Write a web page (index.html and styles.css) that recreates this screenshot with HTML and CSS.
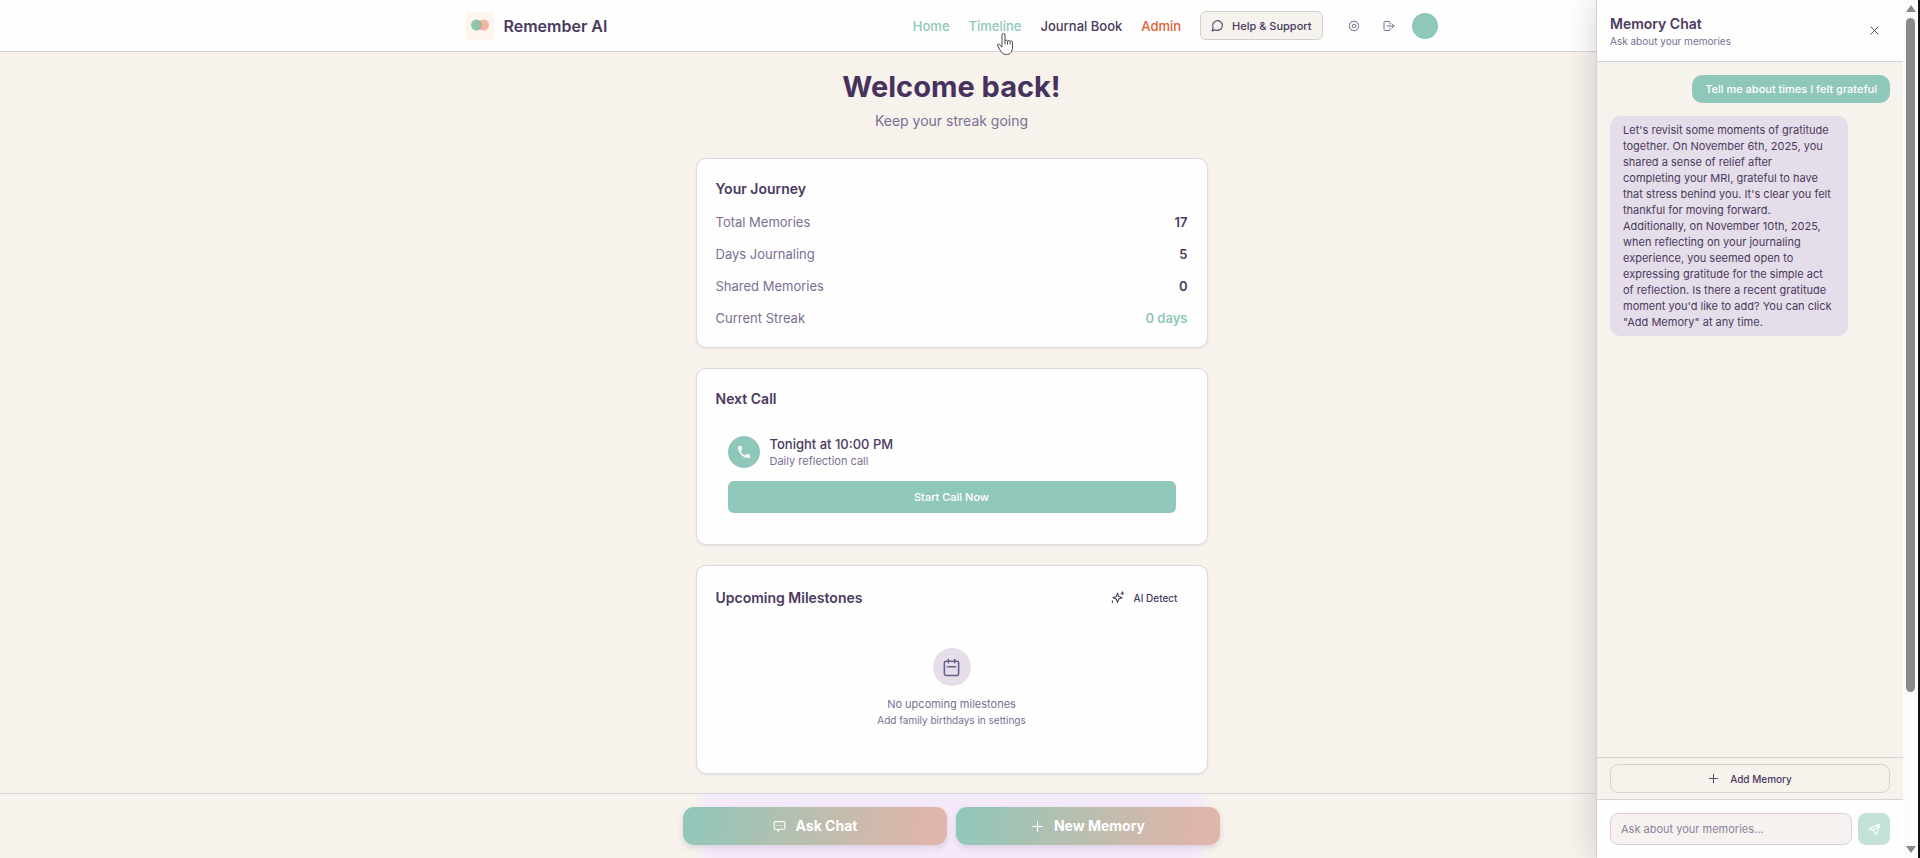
FILE: index.html
```
<!DOCTYPE html>
<html lang="en">

<head>
  <meta charset="UTF-8">
  <meta name="viewport" content="width=device-width, initial-scale=1.0">
  <title>Remember AI</title>
  <link rel="stylesheet" href="styles.css">
</head>

<body>
  <div class="window">
    <div class="app">
      <header class="topbar">
        <div class="topbar-inner">
          <a class="brand" href="#">
            <svg class="brand-logo" viewBox="0 0 28 28" aria-hidden="true">
              <rect width="28" height="28" fill="#fdf5ee" />
              <circle cx="17.5" cy="13" r="5.5" fill="#f5b49f" />
              <circle cx="10.5" cy="13" r="5.5" fill="#8ec5ae" />
              <path d="M14 8.800a5.500 5.500 0 0 1 0 8.400a5.500 5.500 0 0 1 0-8.400z" fill="#b5b295" />
            </svg>
            <span>Remember AI</span>
          </a>
          <nav class="nav">
            <a class="nav-link active" href="#">Home</a>
            <a class="nav-link active" href="#">Timeline</a>
            <a class="nav-link" href="#">Journal Book</a>
            <a class="nav-link admin" href="#">Admin</a>
            <button class="help-btn" type="button">
              <svg class="icon" viewBox="0 0 24 24"><path d="M7.900 20A9 9 0 1 0 4 16.100L2 22Z" /></svg>
              Help &amp; Support
            </button>
            <div class="nav-tools">
              <button class="icon-btn" type="button" aria-label="Settings">
                <svg class="icon" viewBox="0 0 24 24"><path d="M12 2l2.300 1.600 2.700-.3 1.200 2.500 2.500 1.200-.3 2.700L22 12l-1.600 2.300.3 2.700-2.500 1.200-1.200 2.500-2.700-.3L12 22l-2.300-1.600-2.700.3-1.200-2.500L3.300 17l.3-2.700L2 12l1.600-2.300L3.300 7l2.500-1.200L7 3.300l2.700.3z" /><circle cx="12" cy="12" r="3.500" /></svg>
              </button>
              <button class="icon-btn" type="button" aria-label="Log out">
                <svg class="icon" viewBox="0 0 24 24"><path d="M14 8V5a2 2 0 0 0-2-2H4a2 2 0 0 0-2 2v14a2 2 0 0 0 2 2h8a2 2 0 0 0 2-2v-3M8 12h14M18 8l4 4-4 4" /></svg>
              </button>
              <span class="avatar"></span>
            </div>
          </nav>
        </div>
      </header>

      <main class="content">
        <div class="column">
          <h1>Welcome back!</h1>
          <p class="subtitle">Keep your streak going</p>

          <div class="cards">
            <section class="card">
              <h2>Your Journey</h2>
              <dl class="stats">
                <div class="stat"><dt>Total Memories</dt><dd>17</dd></div>
                <div class="stat"><dt>Days Journaling</dt><dd>5</dd></div>
                <div class="stat"><dt>Shared Memories</dt><dd>0</dd></div>
                <div class="stat"><dt>Current Streak</dt><dd class="streak">0 days</dd></div>
              </dl>
            </section>

            <section class="card">
              <h2>Next Call</h2>
              <div class="call">
                <div class="call-row">
                  <span class="call-icon">
                    <svg viewBox="0 0 24 24"><path fill="#fff" d="M6.600 10.800c1.400 2.800 3.800 5.100 6.600 6.600l2.200-2.200c.3-.3.700-.4 1-.2 1.100.4 2.300.6 3.600.6.6 0 1 .4 1 1V20c0 .6-.4 1-1 1C10.600 21 3 13.400 3 4c0-.6.4-1 1-1h3.500c.6 0 1 .4 1 1 0 1.300.2 2.400.6 3.600.1.300 0 .7-.2 1z" /></svg>
                  </span>
                  <div>
                    <p class="call-time">Tonight at 10:00 PM</p>
                    <p class="call-note">Daily reflection call</p>
                  </div>
                </div>
                <button class="call-btn" type="button">Start Call Now</button>
              </div>
            </section>

            <section class="card">
              <div class="card-head">
                <h2>Upcoming Milestones</h2>
                <button class="detect-btn" type="button">
                  <svg class="icon" viewBox="0 0 24 24"><path d="M12 4l2.200 6.300 6.300 2.200-6.300 2.200-2.200 6.300-2.200-6.300-6.300-2.200 6.300-2.200zM21 1.500v5M18.500 4h5M2.500 18v3" /></svg>
                  AI Detect
                </button>
              </div>
              <div class="empty">
                <span class="empty-icon">
                  <svg class="icon" viewBox="0 0 24 24"><rect x="3" y="4" width="18" height="18" rx="2" /><path d="M8 2v4M16 2v4M7 11h10" /></svg>
                </span>
                <p class="empty-title">No upcoming milestones</p>
                <p class="empty-note">Add family birthdays in settings</p>
              </div>
            </section>
          </div>
        </div>
      </main>

      <footer class="bottombar">
        <div class="actions">
          <button class="action-btn" type="button">
            <svg class="icon" viewBox="0 0 24 24"><path d="M4 3h16a2 2 0 0 1 2 2v10a2 2 0 0 1-2 2h-7l-4 4v-4H4a2 2 0 0 1-2-2V5a2 2 0 0 1 2-2zM7.500 10h.01M12 10h.01M16.500 10h.01" /></svg>
            Ask Chat
          </button>
          <button class="action-btn" type="button">
            <svg class="icon" viewBox="0 0 24 24"><path d="M12 3v18M3 12h18" /></svg>
            New Memory
          </button>
        </div>
      </footer>

      <aside class="chat">
        <div class="chat-head">
          <div>
            <h2 class="chat-title">Memory Chat</h2>
            <p class="chat-sub">Ask about your memories</p>
          </div>
          <button class="close-btn" type="button" aria-label="Close chat">
            <svg class="icon" viewBox="0 0 24 24"><path d="M4 4l16 16M20 4L4 20" /></svg>
          </button>
        </div>
        <div class="messages">
          <p class="msg user">Tell me about times I felt grateful</p>
          <p class="msg bot">Let's revisit some moments of gratitude together. On November 6th, 2025, you shared a sense of relief after completing your MRI, grateful to have that stress behind you. It's clear you felt thankful for moving forward. Additionally, on November 10th, 2025, when reflecting on your journaling experience, you seemed open to expressing gratitude for the simple act of reflection. Is there a recent gratitude moment you'd like to add? You can click "Add Memory" at any time.</p>
        </div>
        <div class="chat-add">
          <button class="add-btn" type="button">
            <svg class="icon" viewBox="0 0 24 24"><path d="M12 3v18M3 12h18" /></svg>
            Add Memory
          </button>
        </div>
        <form class="chat-form">
          <input class="chat-input" type="text" aria-label="Ask about your memories" placeholder="Ask about your memories...">
          <button class="send-btn" type="button" aria-label="Send">
            <svg class="icon" viewBox="0 0 24 24"><path d="M22 2L2 10l8 4 5 8zM22 2L10 14" /></svg>
          </button>
        </form>
      </aside>

      <svg class="pointer" viewBox="0 0 18 24" aria-hidden="true">
        <path d="M6 13V3a1.500 1.500 0 0 1 3 0v6a1.300 1.300 0 0 1 2.500.3 1.300 1.300 0 0 1 2.500.5 1.300 1.300 0 0 1 2.500.8V15c0 4-2 7.500-6 7.500-3.500 0-5-2-6.500-4.500l-2.300-4c-.8-1.700.8-2.500 2-1.400L6 15zM9 9v3.500M11.500 9.500v3M14 10v2.500" />
      </svg>
    </div>

    <div class="scrollbar" aria-hidden="true">
      <span class="arrow-up"></span>
      <span class="track"><span class="thumb"></span></span>
      <span class="arrow-down"></span>
    </div>
  </div>
</body>

</html>
```
FILE: styles.css
```
* {
  box-sizing: border-box;
}

body {
  margin: 0;
  font-family: Inter, "Liberation Sans", sans-serif;
  font-size: 13px;
  line-height: 20px;
  color: #4a3a60;
  background-color: #f7f2ec;
}

h1,
h2,
p,
dl,
dd {
  margin: 0;
}

a {
  text-decoration: none;
}

button {
  display: flex;
  align-items: center;
  justify-content: center;
  padding: 0;
  border: none;
  background: none;
  font: inherit;
  color: inherit;
  cursor: pointer;
}

.icon {
  width: 13px;
  height: 13px;
  flex-shrink: 0;
  fill: none;
  stroke: currentColor;
  stroke-width: 2;
  stroke-linecap: round;
  stroke-linejoin: round;
}

.window {
  display: flex;
  height: 100vh;
  border-right: 2px solid #111;
}

.app {
  position: relative;
  display: flex;
  flex-direction: column;
  flex: 1;
  overflow: hidden;
}

/* top bar */
.topbar {
  height: 52px;
  flex-shrink: 0;
  background-color: #fefefe;
  border-bottom: 1px solid #d3d2d6;
}

.topbar-inner {
  display: flex;
  align-items: center;
  justify-content: space-between;
  max-width: 972px;
  height: 100%;
  margin: 0 auto;
}

.brand {
  display: flex;
  align-items: center;
  gap: 10px;
  font-size: 16px;
  font-weight: 600;
  color: #4a3a60;
}

.brand-logo {
  width: 28px;
  height: 28px;
}

.nav {
  display: flex;
  align-items: center;
  gap: 19px;
}

.nav-link {
  font-weight: 500;
  color: #4a3a60;
}

.nav-link.active {
  color: #8fc7ba;
}

.nav-link.admin {
  color: #dd6031;
}

.help-btn {
  gap: 8px;
  height: 29px;
  padding: 0 10px;
  border: 1px solid #d3d0d2;
  border-radius: 6px;
  background-color: #f6f2ed;
  font-size: 11px;
  font-weight: 500;
}

.nav-tools {
  display: flex;
  align-items: center;
  gap: 10px;
}

.icon-btn {
  width: 25px;
  height: 25px;
  color: #7b6f94;
}

.icon-btn .icon {
  width: 12px;
  height: 12px;
}

.avatar {
  width: 26px;
  height: 26px;
  border-radius: 50%;
  background-color: #8fc7ba;
}

/* main column */
.content {
  flex: 1;
  overflow: hidden;
}

.column {
  max-width: 512px;
  margin: 0 auto;
  padding-top: 19px;
}

h1 {
  font-size: 29px;
  line-height: 32px;
  font-weight: 700;
  text-align: center;
  color: #46325c;
}

.subtitle {
  margin: 8px 0 27px;
  font-size: 14px;
  text-align: center;
  color: #7b6f94;
}

.cards {
  display: flex;
  flex-direction: column;
  gap: 20px;
}

.card {
  padding: 19px;
  border: 1px solid #dcd8dc;
  border-radius: 10px;
  background-color: #fefefe;
  box-shadow: 0 1px 2px rgba(74, 58, 96, 0.1);
}

h2 {
  font-size: 14px;
  line-height: 22px;
  font-weight: 600;
}

.stats {
  display: flex;
  flex-direction: column;
  gap: 12px;
  margin-top: 12px;
}

.stat {
  display: flex;
  justify-content: space-between;
}

.stat dt {
  color: #7b6f94;
}

.stat dd {
  font-weight: 600;
}

.stat .streak {
  color: #8fc7ba;
}

.call {
  margin-top: 13px;
  padding: 12px;
}

.call-row {
  display: flex;
  align-items: center;
  gap: 10px;
  margin-bottom: 12px;
}

.call-icon {
  display: flex;
  align-items: center;
  justify-content: center;
  width: 32px;
  height: 32px;
  border-radius: 50%;
  background-color: #8fc7ba;
}

.call-icon svg {
  width: 16px;
  height: 16px;
}

.call-time {
  line-height: 18px;
  font-weight: 500;
}

.call-note {
  font-size: 11px;
  line-height: 16px;
  color: #7b6f94;
}

.call-btn {
  width: 100%;
  height: 32px;
  border-radius: 6px;
  background-color: #8fc7ba;
  font-size: 11px;
  font-weight: 500;
  color: #fff;
}

.card-head {
  display: flex;
  align-items: center;
  justify-content: space-between;
}

.detect-btn {
  gap: 10px;
  height: 25px;
  padding: 0 10px;
  font-size: 10px;
  font-weight: 500;
}

.empty {
  display: flex;
  flex-direction: column;
  align-items: center;
  margin-top: 12px;
  padding: 26px 0;
  line-height: 16px;
  color: #7b6f94;
}

.empty-icon {
  display: flex;
  align-items: center;
  justify-content: center;
  width: 38px;
  height: 38px;
  margin-bottom: 10px;
  border-radius: 50%;
  background-color: #e5ddea;
  color: #6e5f88;
}

.empty-icon .icon {
  width: 19px;
  height: 19px;
}

.empty-title {
  font-size: 11px;
}

.empty-note {
  font-size: 10px;
}

/* bottom bar */
.bottombar {
  height: 65px;
  flex-shrink: 0;
  padding-top: 13px;
  border-top: 1px solid #d8d5d6;
  background: linear-gradient(90deg, rgba(245, 234, 250, 0), #f5eafa 12px, #f5eafa 500px, rgba(245, 234, 250, 0)) center / 512px 100% no-repeat;
}

.actions {
  display: flex;
  gap: 9px;
  max-width: 537px;
  margin: 0 auto;
}

.action-btn {
  flex: 1;
  gap: 10px;
  height: 38px;
  border-radius: 11px;
  background: linear-gradient(100deg, #8fc7ba, #b7bfaf 45%, #e0b5aa 92%);
  box-shadow: 0 3px 6px rgba(74, 58, 96, 0.15);
  font-size: 14px;
  font-weight: 700;
  color: #fff;
}

/* chat panel */
.chat {
  position: absolute;
  top: 0;
  right: 0;
  bottom: 0;
  display: flex;
  flex-direction: column;
  width: 307px;
  border-left: 1px solid #d3d0d2;
  background-color: #f6f2ec;
  box-shadow: -4px 0 24px rgba(74, 58, 96, 0.18);
}

.chat-head {
  display: flex;
  align-items: center;
  justify-content: space-between;
  height: 62px;
  padding: 0 16px 0 13px;
  border-bottom: 1px solid #d3d2d6;
  background-color: #fefefe;
}

.chat-title {
  line-height: 20px;
}

.chat-sub {
  font-size: 10px;
  line-height: 14px;
  color: #7b6f94;
}

.close-btn {
  width: 25px;
  height: 25px;
}

.close-btn .icon {
  width: 11px;
  height: 11px;
}

.messages {
  display: flex;
  flex-direction: column;
  flex: 1;
  gap: 13px;
  padding: 13px;
}

.msg {
  padding: 6px 13px;
  border-radius: 10px;
  font-size: 11px;
  line-height: 16px;
}

.msg.user {
  align-self: flex-end;
  background-color: #8fc7ba;
  font-weight: 500;
  color: #fff;
}

.msg.bot {
  align-self: flex-start;
  max-width: 85%;
  padding-right: 16px;
  background-color: #e5ddea;
}

.chat-add {
  padding: 6px 13px;
  border-top: 1px solid #d6d2d2;
  border-bottom: 1px solid #d3d2d6;
}

.add-btn {
  gap: 11px;
  width: 100%;
  height: 29px;
  border: 1px solid #d8d2d3;
  border-radius: 8px;
  font-size: 10px;
  font-weight: 500;
}

.add-btn .icon {
  width: 11px;
  height: 11px;
}

.chat-form {
  display: flex;
  gap: 6px;
  padding: 13px;
  background-color: #fefefe;
}

.chat-input {
  flex: 1;
  min-width: 0;
  height: 32px;
  padding: 0 10px;
  border: 1px solid #d8cfd8;
  border-radius: 8px;
  background-color: #f7f2ef;
  font: inherit;
  font-size: 11px;
  color: inherit;
}

.chat-input::placeholder {
  color: #8b7f9c;
}

.send-btn {
  width: 32px;
  height: 32px;
  border-radius: 8px;
  background-color: #c3e1d8;
  color: #fff;
}

/* mouse pointer over the nav */
.pointer {
  position: absolute;
  top: 32px;
  left: 996px;
  width: 18px;
  height: 24px;
  fill: #fff;
  stroke: #4b4654;
  stroke-width: 1;
}

/* page scrollbar */
.scrollbar {
  display: flex;
  flex-direction: column;
  align-items: center;
  justify-content: space-between;
  width: 15px;
  padding: 5px 0;
  background-color: #fbfbfb;
}

.arrow-up,
.arrow-down {
  border: 5px solid transparent;
}

.arrow-up {
  border-top: none;
  border-bottom: 7px solid #8a8a8a;
}

.arrow-down {
  border-bottom: none;
  border-top: 7px solid #8a8a8a;
}

.track {
  flex: 1;
  width: 9px;
  padding: 6px 0;
}

.thumb {
  display: block;
  height: 82%;
  border-radius: 5px;
  background-color: #8a8a8a;
}
```
